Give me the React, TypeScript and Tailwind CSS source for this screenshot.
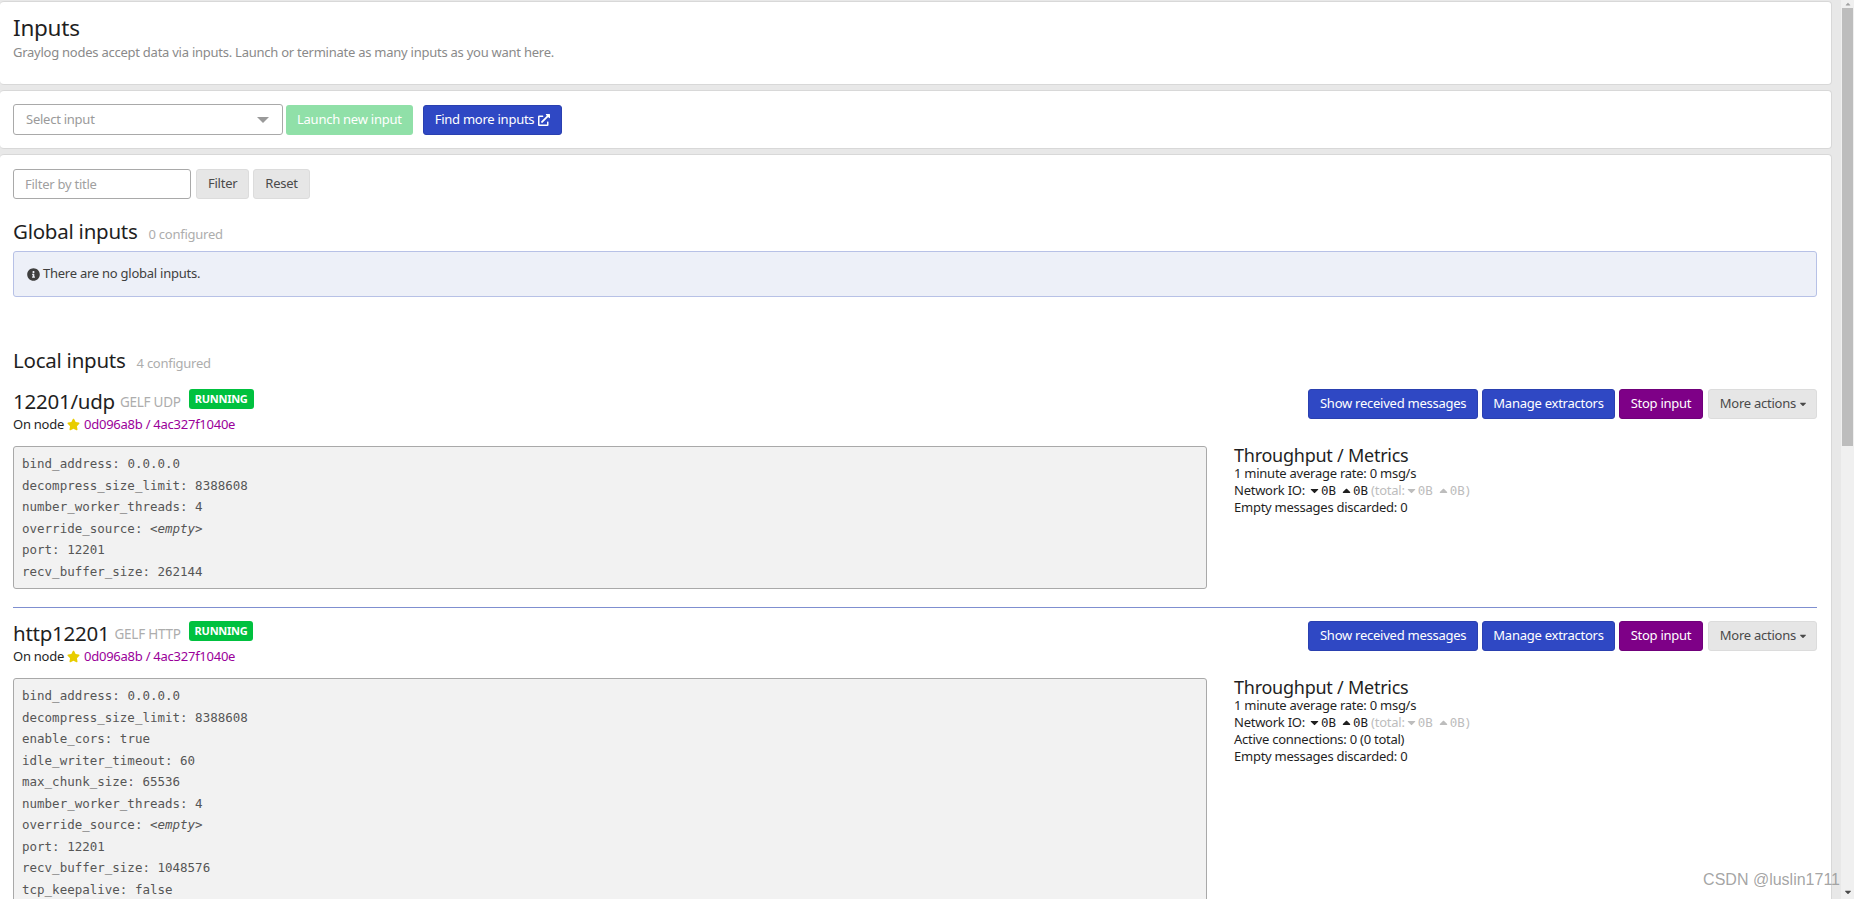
import { FaCaretDown, FaCaretUp, FaExternalLinkAlt, FaInfoCircle, FaStar } from 'react-icons/fa';

const SANS = { fontFamily: '"Noto Sans", "Open Sans", sans-serif' };

const inputs = [
  {
    title: '12201/udp',
    type: 'GELF UDP',
    config: [
      ['bind_address', '0.0.0.0'],
      ['decompress_size_limit', '8388608'],
      ['number_worker_threads', '4'],
      ['override_source', '<empty>'],
      ['port', '12201'],
      ['recv_buffer_size', '262144'],
    ],
    connections: false,
  },
  {
    title: 'http12201',
    type: 'GELF HTTP',
    config: [
      ['bind_address', '0.0.0.0'],
      ['decompress_size_limit', '8388608'],
      ['enable_cors', 'true'],
      ['idle_writer_timeout', '60'],
      ['max_chunk_size', '65536'],
      ['number_worker_threads', '4'],
      ['override_source', '<empty>'],
      ['port', '12201'],
      ['recv_buffer_size', '1048576'],
      ['tcp_keepalive', 'false'],
    ],
    connections: true,
  },
];

function Btn({ children, className }: { children: React.ReactNode; className: string }) {
  return (
    <button className={`h-[30px] rounded-[3px] text-[13px] whitespace-nowrap flex items-center ${className}`}>
      {children}
    </button>
  );
}

function Traffic({ muted }: { muted?: boolean }) {
  const mono = 'font-["DejaVu_Sans_Mono",monospace] text-[12.5px] tracking-normal';
  return (
    <span className={`inline-flex items-center ${muted ? 'text-[#bdbdbd]' : 'text-[#1f1f1f]'}`}>
      <FaCaretDown className="text-[13px]" />
      <span className={mono}>0B</span>
      <FaCaretUp className="text-[13px] ml-[4px]" />
      <span className={mono}>0B</span>
    </span>
  );
}

function InputRow({ item }: { item: (typeof inputs)[number] }) {
  return (
    <div>
      <div className="flex justify-between items-start">
        <div>
          <div className="flex items-start">
            <span className="text-[20.5px] leading-[30px] text-[#1f1f1f]">{item.title}</span>
            <span className="text-[13.5px] leading-[30px] mt-[1px] ml-[5px] text-[#adadad]">{item.type}</span>
            <span className="ml-[8px] mt-[3px] h-[20px] px-[6px] rounded-[3px] bg-[#00c13f] text-white text-[11px] leading-[20px] font-bold">
              RUNNING
            </span>
          </div>
          <div className="flex items-center text-[13px] leading-[17px] mt-[-1px] text-[#1f1f1f]">
            On node
            <FaStar className="text-[#e8cd00] text-[13px] ml-[3px] mr-[4px]" />
            <span className="text-[#9a009a]">0d096a8b / 4ac327f1040e</span>
          </div>
        </div>
        <div className="flex gap-[4px] mt-[3px]">
          <Btn className="px-[10.5px] bg-[#2f48c4] border border-[#2a40b0] text-white">Show received messages</Btn>
          <Btn className="px-[10.5px] bg-[#2f48c4] border border-[#2a40b0] text-white">Manage extractors</Btn>
          <Btn className="px-[10.5px] bg-[#7e0087] border border-[#70007a] text-white">Stop input</Btn>
          <Btn className="pl-[11px] pr-[8px] bg-[#e6e6e6] border border-[#dcdcdc] text-[#4a4a4a] ml-[1px]">
            More actions
            <FaCaretDown className="text-[10px] ml-[2px]" />
          </Btn>
        </div>
      </div>
      <div className="flex mt-[13px]">
        <div className="w-[1194px] shrink-0 border border-[#a9a9a9] rounded-[3px] bg-[#f2f2f2] px-[8px] pt-[6px] pb-[6px] font-['DejaVu_Sans_Mono',monospace] tracking-normal text-[12.5px] leading-[21.5px] text-[#565656]">
          {item.config.map(([k, v]) => (
            <div key={k}>
              {k}: {v === '<empty>' ? <i>{v}</i> : v}
            </div>
          ))}
        </div>
        <div className="ml-[27px] text-[13px] leading-[17px] text-[#1f1f1f]">
          <div className="text-[18px] leading-[20px] mt-[-1px]">Throughput / Metrics</div>
          <div>1 minute average rate: 0 msg/s</div>
          <div className="flex items-center">
            Network IO:
            <span className="ml-[3px] flex items-center">
              <Traffic />
            </span>
            <span className="text-[#bdbdbd] flex items-center ml-[3px]">
              (total:
              <Traffic muted />
              <span className="ml-[1px]">)</span>
            </span>
          </div>
          {item.connections && <div>Active connections: 0 (0 total)</div>}
          <div>Empty messages discarded: 0</div>
        </div>
      </div>
    </div>
  );
}

export default function App() {
  return (
    <div className="h-[899px] overflow-hidden flex bg-[#e8e8e8] relative tracking-[-0.25px]" style={SANS}>
      <div className="w-[1832px] shrink-0 pt-[1px]">
        <div className="h-[84px] bg-white border border-l-0 border-[#d8d8d8] rounded-[4px] pl-[13px] pt-[12px]">
          <h1 className="text-[22.5px] leading-[28px] text-[#1f1f1f]">Inputs</h1>
          <p className="text-[13px] leading-[20px] text-[#8a8a8a]">
            Graylog nodes accept data via inputs. Launch or terminate as many inputs as you want here.
          </p>
        </div>
        <div className="h-[59px] mt-[5px] bg-white border border-l-0 border-[#d8d8d8] rounded-[4px] pl-[13px] flex items-center">
          <div className="w-[270px] h-[31px] border border-[#a9a9a9] rounded-[3px] flex items-center justify-between pl-[12px] pr-[13px] text-[13px] text-[#9a9a9a]">
            Select input
            <span className="w-0 h-0 border-x-[6px] border-x-transparent border-t-[6px] border-t-[#9a9a9a]" />
          </div>
          <Btn className="px-[11px] ml-[3px] bg-[#90e0a8] text-white">Launch new input</Btn>
          <Btn className="px-[11px] ml-[10px] bg-[#2f48c4] border border-[#2a40b0] text-white">
            Find more inputs
            <FaExternalLinkAlt className="text-[12px] ml-[4px]" />
          </Btn>
        </div>
        <div className="h-[760px] mt-[5px] bg-white border border-l-0 border-[#d8d8d8] rounded-[4px] pl-[13px] pr-[14px] pt-[14px]">
          <div className="flex">
            <div className="w-[178px] h-[30px] border border-[#a9a9a9] rounded-[3px] pl-[11px] text-[13px] leading-[28px] text-[#a0a0a0]">
              Filter by title
            </div>
            <Btn className="px-[11px] ml-[5px] bg-[#e6e6e6] border border-[#dcdcdc] text-[#4a4a4a]">Filter</Btn>
            <Btn className="px-[11px] ml-[4px] bg-[#e6e6e6] border border-[#dcdcdc] text-[#4a4a4a]">Reset</Btn>
          </div>
          <div className="mt-[18px] flex items-baseline">
            <h2 className="text-[20.5px] leading-[28px] text-[#1f1f1f]">Global inputs</h2>
            <span className="ml-[11px] text-[13px] text-[#adadad]">0 configured</span>
          </div>
          <div className="mt-[6px] h-[46px] bg-[#edf0f8] border border-[#b7c1e6] rounded-[3px] flex items-center pl-[13px] text-[13px] text-[#3f3f3f]">
            <FaInfoCircle className="text-[13px] mr-[3px]" />
            There are no global inputs.
          </div>
          <div className="mt-[49px] flex items-baseline">
            <h2 className="text-[20.5px] leading-[28px] text-[#1f1f1f]">Local inputs</h2>
            <span className="ml-[11px] text-[13px] text-[#adadad]">4 configured</span>
          </div>
          <div className="mt-[12px]">
            <InputRow item={inputs[0]} />
          </div>
          <div className="border-t border-[#7f8fd0] mt-[18px] mb-[10px]" />
          <InputRow item={inputs[1]} />
        </div>
      </div>
      {/* scrollbar */}
      <div className="ml-[9px] w-[13px] bg-[#f0f0f0] flex flex-col items-center">
        <FaCaretUp className="text-[#a0a0a0] text-[12px] h-[8px]" />
        <div className="w-[11px] h-[438px] bg-[#bdbdbd]" />
        <div className="flex-1" />
        <FaCaretDown className="text-[#4a4a4a] text-[12px] h-[10px] mb-[2px]" />
      </div>
      <div className="absolute right-[14px] bottom-[7px] text-[16px] tracking-normal text-[#9a9a9a]/90 font-['Liberation_Sans',sans-serif]">
        CSDN @luslin1711
      </div>
    </div>
  );
}
